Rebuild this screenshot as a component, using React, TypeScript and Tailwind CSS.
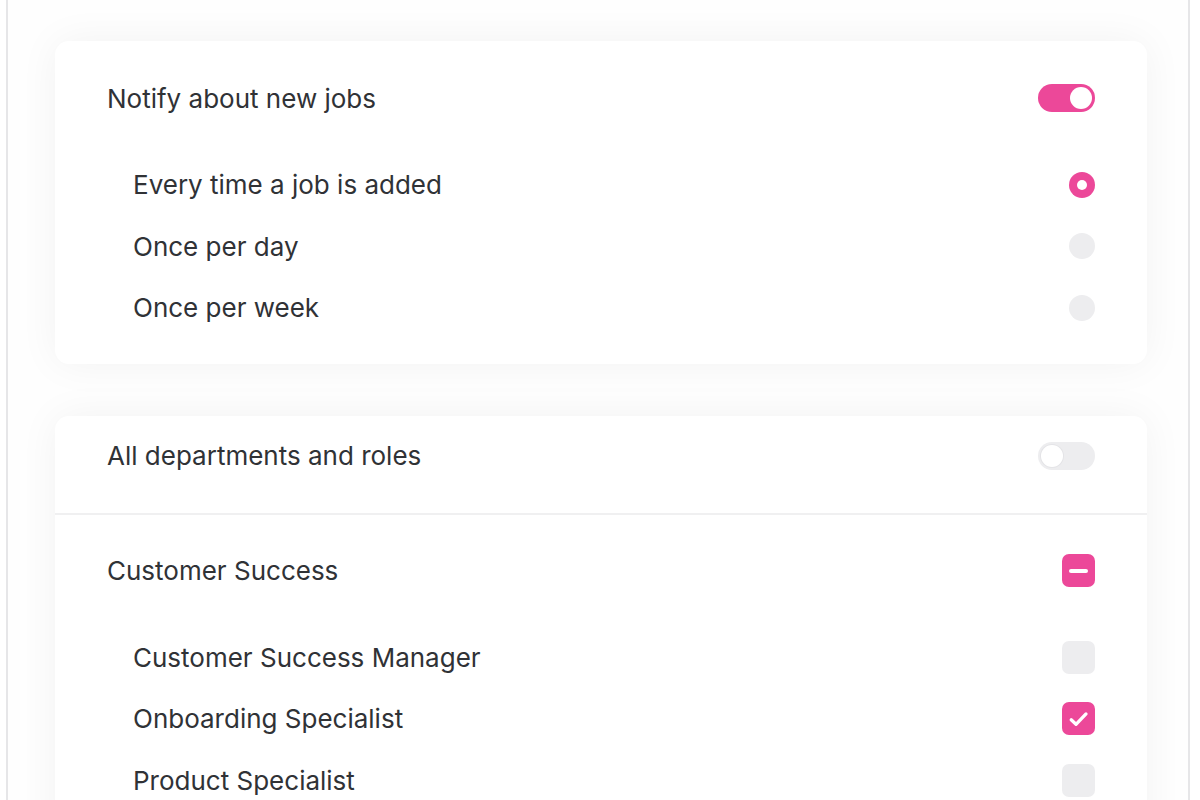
import React from "react";

const font = { fontFamily: "Inter, 'Noto Sans', sans-serif" };

const Toggle = ({ on }: { on: boolean }) => (
  <div
    className={`w-[57px] h-[28px] rounded-full p-[3px] flex ${
      on ? "bg-[#ec4899] justify-end" : "bg-[#ededef] justify-start"
    }`}
  >
    <div className={`w-[22px] h-[22px] rounded-full bg-white ${on ? "" : "shadow-[0_0_0_1px_#e4e4e7]"}`} />
  </div>
);

const Radio = ({ checked }: { checked: boolean }) =>
  checked ? (
    <div className="w-[26px] h-[26px] rounded-full bg-[#ec4899] flex items-center justify-center">
      <div className="w-[10px] h-[10px] rounded-full bg-white" />
    </div>
  ) : (
    <div className="w-[26px] h-[26px] rounded-full bg-[#ededef]" />
  );

const Checkbox = ({ state }: { state: "off" | "on" | "mixed" }) => {
  if (state === "off") return <div className="w-[33px] h-[33px] rounded-[7px] bg-[#ededef]" />;
  return (
    <div className="w-[33px] h-[33px] rounded-[7px] bg-[#ec4899] flex items-center justify-center">
      {state === "mixed" ? (
        <div className="w-[19px] h-[4px] rounded-full bg-white" />
      ) : (
        <svg width="22" height="22" viewBox="0 0 22 22" fill="none">
          <path d="M3.2 11.8l4.8 4.5 10-10.4" stroke="white" strokeWidth="3.3" strokeLinecap="round" strokeLinejoin="round" />
        </svg>
      )}
    </div>
  );
};

const jobOptions = [
  { label: "Every time a job is added", checked: true },
  { label: "Once per day", checked: false },
  { label: "Once per week", checked: false },
];

const roles: { label: string; state: "off" | "on" }[] = [
  { label: "Customer Success Manager", state: "off" },
  { label: "Onboarding Specialist", state: "on" },
  { label: "Product Specialist", state: "off" },
];

export default function App() {
  return (
    <div className="w-full h-[800px] overflow-hidden bg-white text-[26px] text-[#303236]" style={font}>
      <div className="ml-[6px] w-[1184px] h-full border-x-2 border-[#e6e6e8] bg-[#fefefe] pl-[47px] pr-[41px] pt-[41px]">
        {/* Notification frequency */}
        <div className="bg-white rounded-[14px] shadow-[0_0_40px_rgba(0,0,0,0.05)] px-[52px] pt-[29px] pb-[25px]">
          <div className="h-[56px] flex items-center justify-between">
            <span>Notify about new jobs</span>
            <Toggle on />
          </div>
          <div className="mt-[28px]">
            {jobOptions.map((o) => (
              <div key={o.label} className="h-[61.5px] flex items-center justify-between pl-[26px]">
                <span>{o.label}</span>
                <Radio checked={o.checked} />
              </div>
            ))}
          </div>
        </div>

        {/* Departments */}
        <div className="mt-[52px] bg-white rounded-[14px] shadow-[0_0_40px_rgba(0,0,0,0.05)]">
          <div className="px-[52px] pt-[12px] pb-[29px]">
            <div className="h-[56px] flex items-center justify-between">
              <span>All departments and roles</span>
              <Toggle on={false} />
            </div>
          </div>
          <div className="border-t-2 border-[#f0f0f1] px-[52px] pt-[28px] pb-[28px]">
            <div className="h-[56px] flex items-center justify-between">
              <span>Customer Success</span>
              <Checkbox state="mixed" />
            </div>
            <div className="mt-[28px]">
              {roles.map((r) => (
                <div key={r.label} className="h-[61.5px] flex items-center justify-between pl-[26px]">
                  <span>{r.label}</span>
                  <Checkbox state={r.state} />
                </div>
              ))}
            </div>
          </div>
        </div>
      </div>
    </div>
  );
}
